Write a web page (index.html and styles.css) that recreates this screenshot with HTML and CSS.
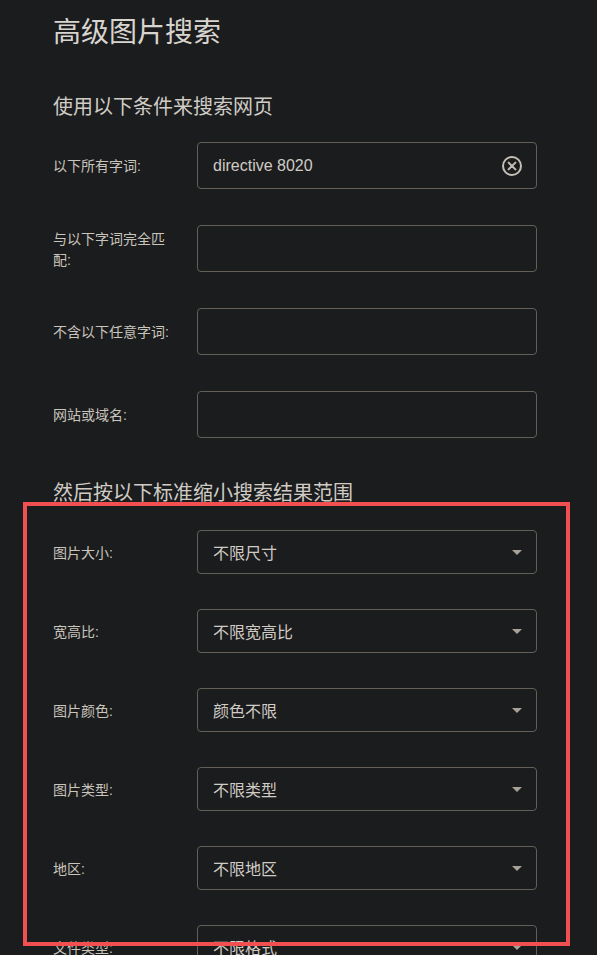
FILE: index.html
```html
<!DOCTYPE html>
<html lang="zh-CN">
<head>
<meta charset="utf-8">
<title>高级图片搜索</title>
<link rel="stylesheet" href="styles.css">
</head>
<body>
<div class="page">
  <h1 class="title">高级图片搜索</h1>
  <h2 class="section">使用以下条件来搜索网页</h2>
  <div class="form inputs">
    <div class="label">以下所有字词:</div>
    <div class="field">
      <span class="value">directive 8020</span>
      <svg class="clear" width="22" height="22" viewBox="0 0 22 22"><circle cx="11" cy="11" r="9" fill="none" stroke="#c4beb5" stroke-width="2"/><path d="M7.6 7.6 L14.4 14.4 M14.4 7.6 L7.6 14.4" stroke="#c4beb5" stroke-width="2" stroke-linecap="round"/></svg>
    </div>
    <div class="label">与以下字词完全匹配:</div>
    <div class="field"></div>
    <div class="label">不含以下任意字词:</div>
    <div class="field"></div>
    <div class="label">网站或域名:</div>
    <div class="field"></div>
  </div>
  <h2 class="section narrow">然后按以下标准缩小搜索结果范围</h2>
  <div class="form selects">
    <div class="label">图片大小:</div>
    <div class="select"><span class="value">不限尺寸</span><span class="arrow"></span></div>
    <div class="label">宽高比:</div>
    <div class="select"><span class="value">不限宽高比</span><span class="arrow"></span></div>
    <div class="label">图片颜色:</div>
    <div class="select"><span class="value">颜色不限</span><span class="arrow"></span></div>
    <div class="label">图片类型:</div>
    <div class="select"><span class="value">不限类型</span><span class="arrow"></span></div>
    <div class="label">地区:</div>
    <div class="select"><span class="value">不限地区</span><span class="arrow"></span></div>
    <div class="label">文件类型:</div>
    <div class="select"><span class="value">不限格式</span><span class="arrow"></span></div>
  </div>
</div>
<div class="highlight"></div>
</body>
</html>
```
FILE: styles.css
```css
html, body {
  margin: 0;
  padding: 0;
  background: #1b1c1e;
  height: 955px;
  overflow: hidden;
}
body {
  font-family: "Liberation Sans", "Noto Sans CJK SC", sans-serif;
  color: #d6d2cc;
  position: relative;
}
.page {
  padding: 15px 0 0 53px;
}
.title {
  margin: 0;
  font-size: 28px;
  font-weight: normal;
  line-height: 36px;
  color: #d8d4ce;
}
.section {
  margin: 42px 0 21px 0;
  font-size: 20px;
  font-weight: normal;
  line-height: 28px;
  color: #d0ccc5;
}
.section.narrow {
  margin: 41px 0 23px 0;
}
.form {
  display: grid;
  grid-template-columns: 144px 340px;
  align-items: center;
}
.inputs {
  row-gap: 36px;
}
.selects {
  row-gap: 35px;
}
.label {
  font-size: 14px;
  line-height: 21px;
  width: 120px;
  padding-top: 2px;
  color: #c9c4bc;
}
.field, .select {
  box-sizing: border-box;
  border: 1px solid #645f56;
  border-radius: 4px;
  display: flex;
  align-items: center;
  padding: 0 14px 0 15px;
  font-size: 16px;
  color: #d0cbc4;
}
.field {
  height: 47px;
}
.select {
  height: 44px;
}
.value {
  flex: 1;
}
.clear {
  display: block;
  margin-right: -1px;
}
.arrow {
  width: 0;
  height: 0;
  border-left: 5px solid transparent;
  border-right: 5px solid transparent;
  border-top: 5px solid #a7a196;
}
.highlight {
  position: absolute;
  left: 23px;
  top: 502px;
  width: 547px;
  height: 444px;
  box-sizing: border-box;
  border: 4px solid #f25050;
  pointer-events: none;
}
```
